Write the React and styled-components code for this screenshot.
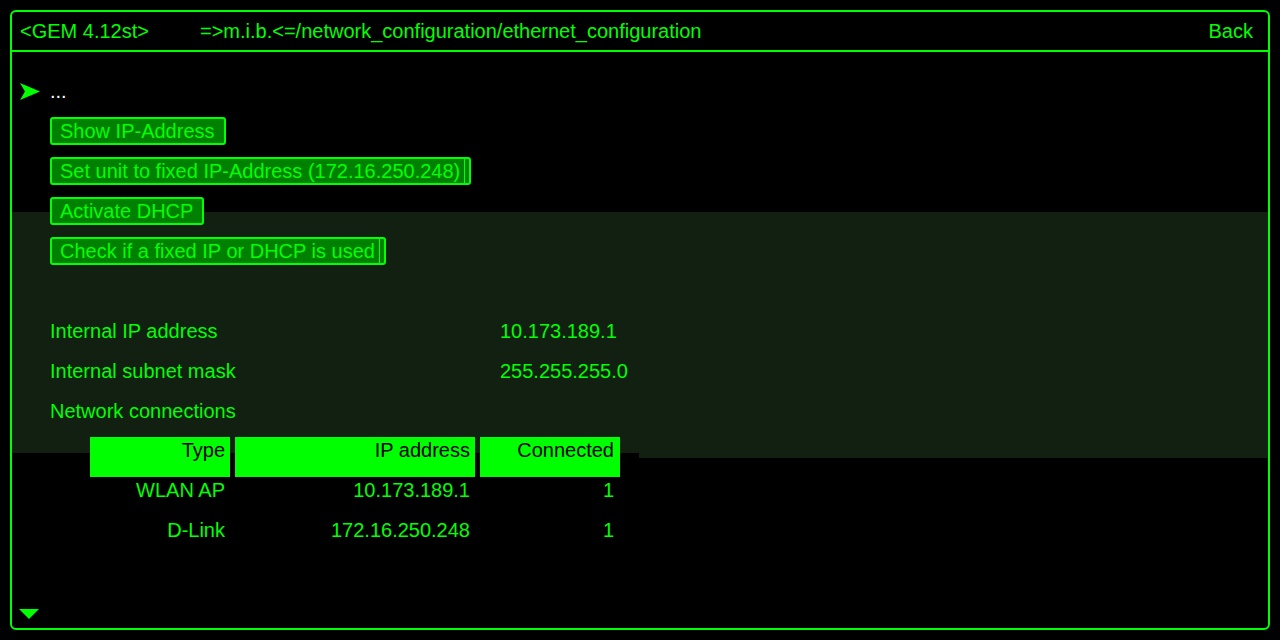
import React from 'react';
import styled, { createGlobalStyle, css } from 'styled-components';

const GREEN = '#00ff00';

const Global = createGlobalStyle`
    html, body {
        margin: 0;
        padding: 0;
        background: #000;
    }
    body {
        font-family: "Liberation Sans", Arial, sans-serif;
        font-size: 20px;
        color: ${GREEN};
    }
`;

const Frame = styled.div`
    box-sizing: border-box;
    margin: 10px;
    width: 1260px;
    height: 620px;
    border: 2px solid ${GREEN};
    border-radius: 6px;
    display: flex;
    flex-direction: column;
    overflow: hidden;
`;

const Header = styled.div`
    height: 38px;
    flex: none;
    display: flex;
    align-items: center;
    padding: 0 15px 0 8px;
    border-bottom: 2px solid ${GREEN};
    white-space: nowrap;
`;

const Version = styled.span`
    width: 180px;
    flex: none;
`;

const Path = styled.span`
    flex: 1;
`;

const Back = styled.span`
    cursor: pointer;
`;

const Body = styled.div`
    position: relative;
    flex: 1;
    display: flex;
    flex-direction: column;
    padding-top: 19px;
`;

// selected-item highlight, sits behind the list
const Highlight = styled.div`
    position: absolute;
    left: 0;
    right: 0;
    top: 160px;
    height: 246px;
    background: #112011;
    clip-path: polygon(0 0, 100% 0, 100% 100%, 627px 100%, 627px 241px, 0 241px);
    z-index: 0;
`;

const Content = styled.div`
    position: relative;
    z-index: 1;
    display: flex;
    flex-direction: column;
`;

const Row = styled.div`
    height: 40px;
    display: flex;
    align-items: center;
    padding-left: ${p => p.indent || 38}px;
    white-space: nowrap;
`;

const Cursor = styled.svg`
    width: 20px;
    height: 17px;
    margin-right: 10px;
    margin-top: 1px;
`;

const Dots = styled.span`
    color: #fff;
`;

const Button = styled.button`
    position: relative;
    box-sizing: border-box;
    height: 28px;
    padding: 0 9px 0 8px;
    border: 2px solid ${GREEN};
    border-radius: 3px;
    background: #008000;
    color: ${GREEN};
    font: inherit;
    font-size: 20px;
    line-height: 24px;
    cursor: pointer;
    ${p =>
        p.clipped &&
        css`
            &::after {
                content: '';
                position: absolute;
                top: 0;
                bottom: 0;
                right: 4px;
                width: 1px;
                background: ${GREEN};
            }
        `}
`;

const Label = styled.span`
    width: 450px;
    flex: none;
`;

const Table = styled.div`
    margin: 6px 0 0 78px;
    display: flex;
    flex-direction: column;
`;

const TRow = styled.div`
    display: grid;
    grid-template-columns: 140px 240px 140px;
    column-gap: 5px;
    height: 40px;
`;

const Cell = styled.div`
    box-sizing: border-box;
    text-align: right;
    padding-right: ${p => p.pr || 5}px;
    line-height: 26px;
    white-space: nowrap;
    ${p =>
        p.head &&
        css`
            background: ${GREEN};
            color: #000;
        `}
`;

const Footer = styled.div`
    margin-top: auto;
    padding: 0 0 9px 7px;
    display: flex;
`;

const Down = styled.div`
    width: 0;
    height: 0;
    border-left: 10px solid transparent;
    border-right: 10px solid transparent;
    border-top: 10px solid ${GREEN};
`;

const actions = [
    { label: 'Show IP-Address' },
    { label: 'Set unit to fixed IP-Address (172.16.250.248)', clipped: true },
    { label: 'Activate DHCP' },
    { label: 'Check if a fixed IP or DHCP is used', clipped: true },
];

const info = [
    ['Internal IP address', '10.173.189.1'],
    ['Internal subnet mask', '255.255.255.0'],
    ['Network connections', ''],
];

const connections = [
    ['WLAN AP', '10.173.189.1', '1'],
    ['D-Link', '172.16.250.248', '1'],
];

export default function App() {
    return (
        <>
            <Global />
            <Frame>
                <Header>
                    <Version>&lt;GEM 4.12st&gt;</Version>
                    <Path>=&gt;m.i.b.&lt;=/network_configuration/ethernet_configuration</Path>
                    <Back>Back</Back>
                </Header>
                <Body>
                    <Highlight />
                    <Content>
                        <Row indent={8}>
                            <Cursor viewBox="0 0 20 17">
                                <polygon points="0,0 20,8.5 0,17 5,8.5" fill={GREEN} />
                            </Cursor>
                            <Dots>...</Dots>
                        </Row>
                        {actions.map(a => (
                            <Row key={a.label}>
                                <Button clipped={a.clipped}>{a.label}</Button>
                            </Row>
                        ))}
                        <Row />
                        {info.map(([k, v]) => (
                            <Row key={k}>
                                <Label>{k}</Label>
                                <span>{v}</span>
                            </Row>
                        ))}
                        <Table>
                            <TRow>
                                <Cell head>Type</Cell>
                                <Cell head>IP address</Cell>
                                <Cell head pr={6}>Connected</Cell>
                            </TRow>
                            {connections.map(c => (
                                <TRow key={c[0]}>
                                    <Cell>{c[0]}</Cell>
                                    <Cell>{c[1]}</Cell>
                                    <Cell pr={6}>{c[2]}</Cell>
                                </TRow>
                            ))}
                        </Table>
                    </Content>
                    <Footer>
                        <Down />
                    </Footer>
                </Body>
            </Frame>
        </>
    );
}
